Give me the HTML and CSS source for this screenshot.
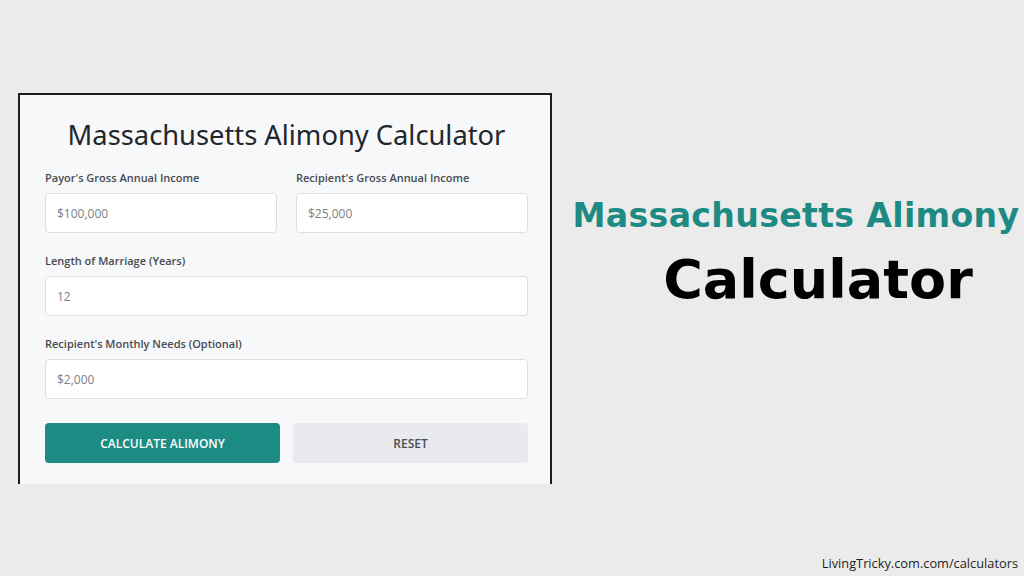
FILE: index.html
```html
<!DOCTYPE html>
<html lang="en">
<head>
    <meta charset="UTF-8">
    <meta name="viewport" content="width=device-width, initial-scale=1.0">
    <title>Massachusetts Alimony Calculator</title>
    <link rel="stylesheet" href="styles.css">
</head>
<body>

    <div class="main">
        <!-- Calculator Card (screenshot, cut off at the bottom) -->
        <div class="card">
            <h1>Massachusetts Alimony Calculator</h1>

            <div class="row">
                <div class="field">
                    <label for="payor">Payor's Gross Annual Income</label>
                    <input type="text" id="payor" placeholder="$100,000">
                </div>
                <div class="field">
                    <label for="recipient">Recipient's Gross Annual Income</label>
                    <input type="text" id="recipient" placeholder="$25,000">
                </div>
            </div>

            <div class="field">
                <label for="years">Length of Marriage (Years)</label>
                <input type="text" id="years" placeholder="12">
            </div>

            <div class="field">
                <label for="needs">Recipient's Monthly Needs (Optional)</label>
                <input type="text" id="needs" placeholder="$2,000">
            </div>

            <div class="buttons">
                <button class="btn btn-calc">CALCULATE ALIMONY</button>
                <button class="btn btn-reset">RESET</button>
            </div>
        </div>

        <!-- Headline -->
        <div class="headline">
            <h2>Massachusetts Alimony</h2>
            <h3>Calculator</h3>
        </div>
    </div>

    <footer>LivingTricky.com.com/calculators</footer>

</body>
</html>
```

FILE: styles.css
```css
/* Basic Reset */
* {
    margin: 0;
    padding: 0;
    box-sizing: border-box;
}
body {
    font-family: "Open Sans", "Noto Sans", sans-serif;
    background-color: #ebebeb;
    color: #222;
    width: 1024px;
    height: 576px;
    overflow: hidden;
    display: flex;
    flex-direction: column;
}

.main {
    display: flex;
    padding: 93px 0 0 18px;
}

/* Calculator Card */
.card {
    width: 534px;
    height: 391px;
    overflow: hidden;
    background: #f7f8fa;
    border: 2px solid #1c1c1c;
    border-bottom: none;
    padding: 22px 22px 0 25px;
}
.card h1 {
    font-family: "Noto Sans", "Open Sans", sans-serif;
    font-size: 27.3px;
    font-weight: 400;
    color: #23272b;
    text-align: center;
    line-height: 36px;
    margin-bottom: 17px;
}
.row {
    display: flex;
    gap: 19px;
}
.row .field {
    flex: 1;
}
.field {
    display: flex;
    flex-direction: column;
    margin-bottom: 20px;
}
.field label {
    font-size: 11px;
    font-weight: 600;
    color: #474b50;
    line-height: 16px;
    margin-bottom: 7px;
}
.field input {
    height: 40px;
    border: 1px solid #dcdfe3;
    border-radius: 4px;
    background: #fff;
    padding: 0 11px;
    font-family: "Open Sans", sans-serif;
    font-size: 12px;
    outline: none;
}
.field input::placeholder {
    color: #7b7f84;
}

/* Buttons */
.buttons {
    display: flex;
    gap: 13px;
    margin-top: 24px;
}
.btn {
    flex: 1;
    height: 40px;
    border: none;
    border-radius: 4px;
    font-family: "Open Sans", sans-serif;
    font-size: 12px;
    font-weight: 600;
    cursor: pointer;
}
.btn-calc {
    background: #1b8b83;
    color: #fff;
}
.btn-reset {
    background: #e8eaed;
    color: #4a4e53;
}

/* Headline */
.headline {
    flex: 1;
    display: flex;
    flex-direction: column;
    align-items: center;
    padding: 103px 0 0 16px;
}
.headline h2 {
    font-family: "DejaVu Sans", sans-serif;
    font-size: 33.2px;
    font-weight: 700;
    color: #1d8b84;
    line-height: 40px;
    letter-spacing: 0.3px;
}
.headline h3 {
    font-family: "DejaVu Sans", sans-serif;
    font-size: 54px;
    font-weight: 700;
    color: #000;
    line-height: 64px;
    margin: 12px 0 0 44px;
}

/* Footer */
footer {
    margin-top: auto;
    text-align: right;
    padding: 0 6px 4px 0;
    font-family: "Open Sans", sans-serif;
    font-size: 12.8px;
    color: #1f1f1f;
}
```
